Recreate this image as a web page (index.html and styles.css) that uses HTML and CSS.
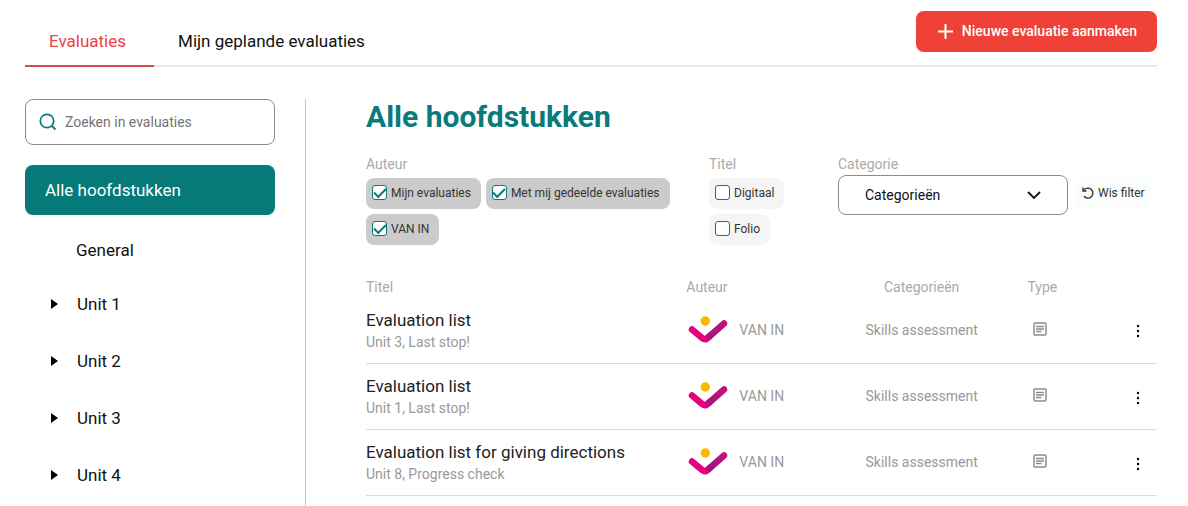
FILE: index.html
```html
<!DOCTYPE html>
<html lang="nl">
<head>
  <meta charset="UTF-8">
  <meta name="viewport" content="width=device-width, initial-scale=1.0">
  <title>Evaluaties</title>
  <link rel="stylesheet" href="styles.css">
</head>
<body>
  <!-- shared icons -->
  <svg class="sprite" aria-hidden="true">
    <defs>
      <linearGradient id="logo-gradient" gradientUnits="userSpaceOnUse" x1="19" y1="24" x2="40" y2="6">
        <stop offset="0" stop-color="#b5127f"/>
        <stop offset="0.25" stop-color="#a3157c"/>
        <stop offset="1" stop-color="#c4107f"/>
      </linearGradient>
    </defs>
    <symbol id="logo" viewBox="0 0 42 30">
      <path d="M6 14.500L16.500 23.300Q19 25.300 21.500 23L24 20.800" fill="none" stroke="#e6007e" stroke-width="6.500" stroke-linecap="round"/>
      <path d="M23 21.700L38 8.500" fill="none" stroke="url(#logo-gradient)" stroke-width="6.500" stroke-linecap="round"/>
      <circle cx="19.300" cy="6" r="4.700" fill="#fab900"/>
    </symbol>
    <symbol id="doc" viewBox="0 0 14 14">
      <rect x="1" y="1" width="12" height="12" rx="1" fill="none" stroke="#8c8c8c" stroke-width="1.500"/>
      <path d="M3 4.500H11M3 7H11M3 9.500H8.500" fill="none" stroke="#8c8c8c" stroke-width="1.300"/>
    </symbol>
    <symbol id="dots" viewBox="0 0 4 14">
      <circle cx="2" cy="2" r="1.200"/>
      <circle cx="2" cy="7" r="1.200"/>
      <circle cx="2" cy="12" r="1.200"/>
    </symbol>
  </svg>

  <header class="topbar">
    <nav class="tabs">
      <a class="tab active" href="#evaluaties">Evaluaties</a>
      <a class="tab" href="#gepland">Mijn geplande evaluaties</a>
    </nav>
    <button class="create-button" type="button">
      <svg width="15" height="15" viewBox="0 0 15 15"><path d="M7.500 0V15M0 7.500H15" stroke="#fff" stroke-width="2"/></svg>
      Nieuwe evaluatie aanmaken
    </button>
  </header>

  <div class="layout">
    <aside class="sidebar">
      <div class="search">
        <svg width="18" height="18" viewBox="0 0 18 18"><circle cx="8" cy="8" r="6.700" fill="none" stroke="#087b7a" stroke-width="1.700"/><path d="M12.500 12.500L16.500 16.500" stroke="#087b7a" stroke-width="1.800"/></svg>
        <input type="text" placeholder="Zoeken in evaluaties" aria-label="Zoeken in evaluaties">
      </div>
      <button class="chapter-all" type="button">Alle hoofdstukken</button>
      <ul class="chapters">
        <li class="general"><a href="#general">General</a></li>
        <li><a href="#unit-1"><span class="arrow"></span>Unit 1</a></li>
        <li><a href="#unit-2"><span class="arrow"></span>Unit 2</a></li>
        <li><a href="#unit-3"><span class="arrow"></span>Unit 3</a></li>
        <li><a href="#unit-4"><span class="arrow"></span>Unit 4</a></li>
      </ul>
    </aside>

    <main class="content">
      <h1>Alle hoofdstukken</h1>

      <form class="filters">
        <div class="filter" role="group" aria-labelledby="filter-author">
          <span class="filter-label" id="filter-author">Auteur</span>
          <div class="chips">
            <label class="chip checked"><input type="checkbox" checked>Mijn evaluaties</label>
            <label class="chip checked"><input type="checkbox" checked>Met mij gedeelde evaluaties</label>
            <label class="chip checked"><input type="checkbox" checked>VAN IN</label>
          </div>
        </div>
        <div class="filter" role="group" aria-labelledby="filter-title">
          <span class="filter-label" id="filter-title">Titel</span>
          <div class="chips">
            <label class="chip"><input type="checkbox">Digitaal</label>
            <label class="chip"><input type="checkbox">Folio</label>
          </div>
        </div>
        <div class="filter category">
          <label class="filter-label" for="category">Categorie</label>
          <div class="select">
            <select id="category">
              <option>Categorieën</option>
            </select>
            <svg width="14" height="8" viewBox="0 0 14 8"><path d="M1 1L7 7L13 1" fill="none" stroke="#111" stroke-width="1.800"/></svg>
          </div>
        </div>
        <button class="reset" type="reset">
          <svg width="12" height="12" viewBox="0 0 12 12"><path d="M1.800 3.200A5 5 0 1 1 2 9.300" fill="none" stroke="#333" stroke-width="1.400"/><path d="M1 0.500V4H4.500" fill="none" stroke="#333" stroke-width="1.400"/></svg>
          Wis filter
        </button>
      </form>

      <table class="evaluations">
        <thead>
          <tr>
            <th class="col-title">Titel</th>
            <th class="col-author">Auteur</th>
            <th class="col-category">Categorieën</th>
            <th class="col-type">Type</th>
            <th class="col-menu"></th>
          </tr>
        </thead>
        <tbody>
          <tr>
            <td class="col-title"><a class="name" href="#evaluation-1">Evaluation list</a><span class="chapter">Unit 3, Last stop!</span></td>
            <td><div class="author"><svg width="42" height="30"><use href="#logo"/></svg>VAN IN</div></td>
            <td class="col-category">Skills assessment</td>
            <td class="col-type"><svg width="14" height="14"><use href="#doc"/></svg></td>
            <td class="col-menu"><button type="button" aria-label="Menu"><svg width="4" height="14"><use href="#dots"/></svg></button></td>
          </tr>
          <tr>
            <td class="col-title"><a class="name" href="#evaluation-2">Evaluation list</a><span class="chapter">Unit 1, Last stop!</span></td>
            <td><div class="author"><svg width="42" height="30"><use href="#logo"/></svg>VAN IN</div></td>
            <td class="col-category">Skills assessment</td>
            <td class="col-type"><svg width="14" height="14"><use href="#doc"/></svg></td>
            <td class="col-menu"><button type="button" aria-label="Menu"><svg width="4" height="14"><use href="#dots"/></svg></button></td>
          </tr>
          <tr>
            <td class="col-title"><a class="name" href="#evaluation-3">Evaluation list for giving directions</a><span class="chapter">Unit 8, Progress check</span></td>
            <td><div class="author"><svg width="42" height="30"><use href="#logo"/></svg>VAN IN</div></td>
            <td class="col-category">Skills assessment</td>
            <td class="col-type"><svg width="14" height="14"><use href="#doc"/></svg></td>
            <td class="col-menu"><button type="button" aria-label="Menu"><svg width="4" height="14"><use href="#dots"/></svg></button></td>
          </tr>
        </tbody>
      </table>
    </main>
  </div>
</body>
</html>
```
FILE: styles.css
```css
* {
  box-sizing: border-box;
}

body {
  font-family: Roboto, Arial, sans-serif;
  font-size: 14px;
  color: #222;
  background-color: #fff;
  margin: 0;
  padding: 0 31px 0 25px;
  min-height: 100vh;
  display: flex;
  flex-direction: column;
}

a {
  color: inherit;
  text-decoration: none;
}

button, input, select {
  font-family: inherit;
}

button {
  border: none;
  cursor: pointer;
}

.sprite {
  display: block;
  width: 0;
  height: 0;
}

.topbar {
  display: flex;
  justify-content: space-between;
  align-items: flex-start;
  border-bottom: 2px solid #e8e8e8;
}

.tabs {
  display: flex;
  padding-top: 18px;
}

.tab {
  padding: 0 28px 0 24px;
  margin-bottom: -2px;
  font-size: 17px;
  line-height: 47px;
  color: #111;
  border-bottom: 2px solid transparent;
}

.tab.active {
  color: #e8434a;
  border-color: #dc4a45;
}

.create-button {
  display: flex;
  align-items: center;
  gap: 9px;
  height: 41px;
  margin-top: 11px;
  padding: 0 20px 1px 22px;
  font-size: 14px;
  font-weight: 500;
  color: #fff;
  background-color: #ef4137;
  border-radius: 8px;
}

.layout {
  flex: 1;
  display: flex;
  padding-top: 32px;
}

.sidebar {
  width: 281px;
  flex-shrink: 0;
  padding-right: 30px;
  border-right: 1px solid #c8c8c8;
}

.search {
  display: flex;
  align-items: center;
  gap: 8px;
  height: 46px;
  padding: 0 13px;
  border: 1px solid #8c8c8c;
  border-radius: 8px;
}

.search input {
  flex: 1;
  min-width: 0;
  padding: 0;
  font-size: 14px;
  border: none;
  outline: none;
}

.search input::placeholder {
  color: #757575;
}

.chapter-all {
  width: 100%;
  height: 50px;
  margin-top: 20px;
  padding: 0 20px;
  font-size: 17px;
  font-weight: 400;
  text-align: left;
  color: #fff;
  background-color: #067a79;
  border-radius: 8px;
}

.chapters {
  list-style: none;
  margin: 10px 0 0;
  padding: 0;
  font-size: 17px;
  line-height: 57px;
  color: #111;
}

.chapters a {
  display: flex;
  align-items: center;
  padding-left: 26px;
}

.chapters .general {
  line-height: 51px;
}

.chapters .general a {
  padding-left: 51px;
}

.arrow {
  margin: 0 19px 2px 0;
  border-left: 7px solid #000;
  border-top: 5px solid transparent;
  border-bottom: 5px solid transparent;
}

.content {
  flex: 1;
  min-width: 0;
  padding-left: 60px;
}

h1 {
  margin: 0;
  font-size: 30px;
  line-height: 36px;
  color: #087b7a;
}

.filters {
  display: grid;
  grid-template-columns: 343fr 129fr 238fr 81fr;
  align-items: start;
  margin-top: 20px;
}

.filter-label {
  display: block;
  font-size: 14px;
  line-height: 18px;
  color: #aaa;
}

.chips {
  display: flex;
  flex-wrap: wrap;
  gap: 5px;
  margin-top: 5px;
}

.chip {
  display: flex;
  align-items: center;
  gap: 4px;
  height: 31px;
  padding: 0 10px 2px 6px;
  font-size: 12px;
  color: #333;
  background-color: #f5f5f5;
  border-radius: 8px;
}

.chip.checked {
  background-color: #cbcbcb;
}

.chip input {
  appearance: none;
  display: grid;
  place-items: center;
  width: 15px;
  height: 15px;
  margin: 0;
  background-color: #fff;
  border: 1px solid #087b7a;
  border-radius: 3px;
}

.chip input:checked::before {
  content: "";
  width: 10px;
  height: 5px;
  margin-bottom: 3px;
  border-left: 2px solid #087b7a;
  border-bottom: 2px solid #087b7a;
  transform: rotate(-45deg);
}

.category {
  padding-right: 8px;
}

.select {
  display: grid;
  align-items: center;
  margin-top: 2px;
}

.select select, .select svg {
  grid-area: 1 / 1;
}

.select select {
  appearance: none;
  width: 100%;
  height: 40px;
  padding: 0 26px;
  font-size: 14px;
  color: #111;
  background-color: #fff;
  border: 1px solid #8c8c8c;
  border-radius: 8px;
}

.select svg {
  justify-self: end;
  margin-right: 27px;
  pointer-events: none;
}

.reset {
  display: flex;
  align-items: center;
  justify-self: start;
  gap: 4px;
  height: 31px;
  margin-top: 22px;
  padding: 0 6px;
  font-size: 12px;
  color: #333;
  white-space: nowrap;
  background-color: #fbfcfc;
  border-radius: 8px;
}

.evaluations {
  width: 100%;
  margin-top: 32px;
  border-collapse: collapse;
  table-layout: fixed;
}

.evaluations th {
  height: 20px;
  padding: 0;
  font-weight: 400;
  text-align: left;
  color: #aaa;
}

.evaluations td {
  height: 66px;
  padding: 0;
  color: #999;
  border-bottom: 1px solid #dcdcdc;
}

.col-title {
  width: 40.5%;
}

.evaluations td.col-title {
  padding-top: 2px;
}

.col-author {
  width: 19%;
}

.evaluations .col-category {
  width: 21.5%;
  text-align: center;
}

.evaluations .col-type {
  width: 9%;
  text-align: center;
}

.evaluations td.col-type {
  padding: 0 4px 4px 0;
}

.evaluations .col-menu {
  width: 10%;
  text-align: right;
}

.name, .chapter {
  display: block;
  line-height: 22px;
}

.name {
  font-size: 17px;
  color: #222;
}

.author {
  display: flex;
  align-items: center;
  gap: 11px;
}

.col-type svg {
  vertical-align: middle;
}

.col-menu button {
  padding: 2px 17px 0;
  background: none;
  vertical-align: middle;
}

.col-menu svg {
  display: block;
}
```
